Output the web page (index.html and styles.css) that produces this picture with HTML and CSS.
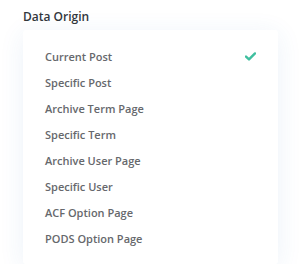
FILE: index.html
```html
<!DOCTYPE html>
<html lang="en">
<head>
    <meta charset="UTF-8">
    <title>Data Origin</title>
    <link rel="stylesheet" href="styles.css">
</head>
<body>
    <div class="field">
        <h3 class="field-label">Data Origin</h3>
        <ul class="options">
            <li class="option selected">
                <span>Current Post</span>
                <svg class="check" width="11" height="9" viewBox="0 0 11 9">
                    <path d="M1 4.6 L4 7.4 L10 1.4" fill="none" stroke="#3fbf9f" stroke-width="2.4" stroke-linecap="round" stroke-linejoin="round"/>
                </svg>
            </li>
            <li class="option"><span>Specific Post</span></li>
            <li class="option"><span>Archive Term Page</span></li>
            <li class="option"><span>Specific Term</span></li>
            <li class="option"><span>Archive User Page</span></li>
            <li class="option"><span>Specific User</span></li>
            <li class="option"><span>ACF Option Page</span></li>
            <li class="option"><span>PODS Option Page</span></li>
        </ul>
    </div>
</body>
</html>
```

FILE: styles.css
```css
body {
    margin: 0;
    background-color: #ffffff;
    font-family: "Open Sans", sans-serif;
}
.field {
    padding: 9px 22px 0 23px;
}
.field-label {
    margin: 0 0 5px 0;
    font-size: 12px;
    font-weight: 600;
    color: #32373c;
    line-height: 16px;
}
.options {
    list-style: none;
    margin: 0;
    padding: 13px 0 13px 0;
    background-color: #fff;
    border-radius: 3px;
    box-shadow: 0 4px 26px rgba(45, 110, 190, 0.09);
}
.option {
    display: flex;
    justify-content: space-between;
    align-items: center;
    height: 26px;
    padding: 0 22px 0 22px;
    font-size: 11px;
    font-weight: 600;
    color: #66686c;
}
.check {
    display: block;
}
```
